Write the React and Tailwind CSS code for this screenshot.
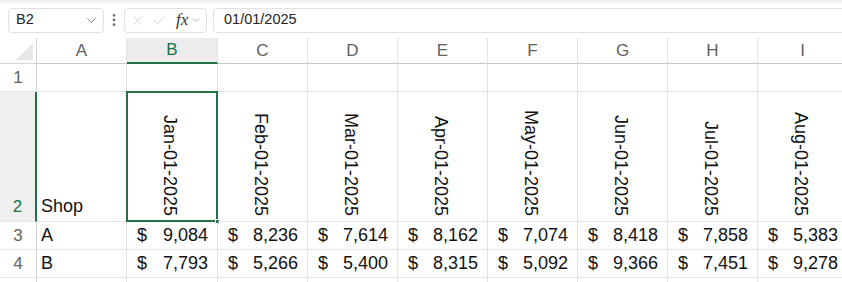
import { Fragment } from "react";
import { ChevronDown, EllipsisVertical, X, Check } from "lucide-react";

const cols = ["A", "B", "C", "D", "E", "F", "G", "H", "I"];
const dates = [
  "Jan-01-2025",
  "Feb-01-2025",
  "Mar-01-2025",
  "Apr-01-2025",
  "May-01-2025",
  "Jun-01-2025",
  "Jul-01-2025",
  "Aug-01-2025",
];
const shops = [
  { name: "A", values: ["9,084", "8,236", "7,614", "8,162", "7,074", "8,418", "7,858", "5,383"] },
  { name: "B", values: ["7,793", "5,266", "5,400", "8,315", "5,092", "9,366", "7,451", "9,278"] },
];

const cell = "border-r border-b border-[#e3e3e3]";

const RowHeader = ({ n, active, bottom }) => (
  <div
    className={`flex justify-center border-b border-[#e3e3e3] text-[17px] ${
      bottom ? "items-end pb-[2px]" : "items-center"
    } ${
      active
        ? "bg-[#efefef] text-[#217346] border-r-2 border-r-[#217346]"
        : "text-[#616161] border-r border-r-[#d4d4d4]"
    }`}
  >
    {n}
  </div>
);

const App = () => {
  return (
    <div
      className="w-[842px] h-[282px] overflow-hidden bg-white text-[#111]"
      style={{ fontFamily: '"Liberation Sans", Arial, sans-serif' }}
    >
      {/* formula bar */}
      <div className="h-[37px] flex items-center pl-[8px] border-t-[3px] border-[#f4f1f1]">
        <div className="w-[96px] h-[25px] flex items-center justify-between border border-[#e1e1e1] rounded-[4px] pl-[7px] pr-[4px] text-[14.5px] text-[#242424]">
          <span>B2</span>
          <ChevronDown size={15} strokeWidth={1.5} className="text-[#707070]" />
        </div>
        <EllipsisVertical size={16} strokeWidth={2.2} className="text-[#707070] ml-[2px]" />
        <div className="ml-[2px] w-[83px] h-[25px] flex items-center border border-[#e1e1e1] rounded-[4px] pl-[5px] text-[#c8c8c8]">
          <X size={15} strokeWidth={1.2} />
          <Check size={15} strokeWidth={1.2} className="ml-[7px]" />
          <span
            className="ml-[9px] italic text-[17px] text-[#333]"
            style={{ fontFamily: '"Liberation Serif", "Times New Roman", serif' }}
          >
            fx
          </span>
          <ChevronDown size={12} strokeWidth={1.5} className="ml-[2px] text-[#9a9a9a]" />
        </div>
        <div className="ml-[6px] flex-1 h-[25px] flex items-center border border-[#e1e1e1] border-r-0 rounded-l-[4px] pl-[10px] text-[14.5px] text-[#242424]">
          01/01/2025
        </div>
      </div>

      {/* grid */}
      <div className="grid grid-cols-[37px_90px_91px_90px_90px_90px_90px_90px_90px_90px] grid-rows-[26px_28px_130px_28px_28px_28px] mt-[1px]">
        {/* header row */}
        <div className="relative border-r border-b border-[#d4d4d4]">
          <div className="absolute right-[3px] bottom-[3px] w-0 h-0 border-l-[17px] border-l-transparent border-b-[17px] border-b-[#e8e8e8]" />
        </div>
        {cols.map((c) => (
          <div
            key={c}
            className={`flex items-center justify-center text-[17px] border-r border-[#e3e3e3] ${
              c === "B"
                ? "bg-[#ececec] text-[#217346] border-b-2 border-b-[#217346]"
                : "text-[#616161] border-b border-b-[#c8c8c8]"
            }`}
          >
            {c}
          </div>
        ))}

        {/* row 1 */}
        <RowHeader n="1" />
        {cols.map((c) => (
          <div key={c} className={cell} />
        ))}

        {/* row 2 */}
        <RowHeader n="2" active bottom />
        <div className={`${cell} flex items-end pl-[4px] pb-[1px] text-[18px]`}>Shop</div>
        {dates.map((d, i) => (
          <div key={d} className={`${cell} relative flex items-end justify-center pb-[5px] pr-[4px]`}>
            <span className="[writing-mode:vertical-rl] text-[18px] leading-none">{d}</span>
            {i === 0 && (
              <>
                <div className="absolute -left-px -top-px -right-px -bottom-px border-2 border-[#217346]" />
                <div className="absolute -right-[3px] -bottom-[3px] w-[5px] h-[5px] bg-[#217346] border border-white" />
              </>
            )}
          </div>
        ))}

        {/* data rows */}
        {shops.map((s, r) => (
          <Fragment key={s.name}>
            <RowHeader n={String(r + 3)} />
            <div className={`${cell} flex items-center pl-[4px] text-[18px]`}>{s.name}</div>
            {s.values.map((v, i) => (
              <div
                key={i}
                className={`${cell} flex items-center justify-between pl-[10px] pr-[9px] text-[18px]`}
              >
                <span>$</span>
                <span>{v}</span>
              </div>
            ))}
          </Fragment>
        ))}

        {/* row 5, cut off at the bottom edge */}
        <RowHeader n="" />
        {cols.map((c) => (
          <div key={c} className={cell} />
        ))}
      </div>
    </div>
  );
};

export default App;
